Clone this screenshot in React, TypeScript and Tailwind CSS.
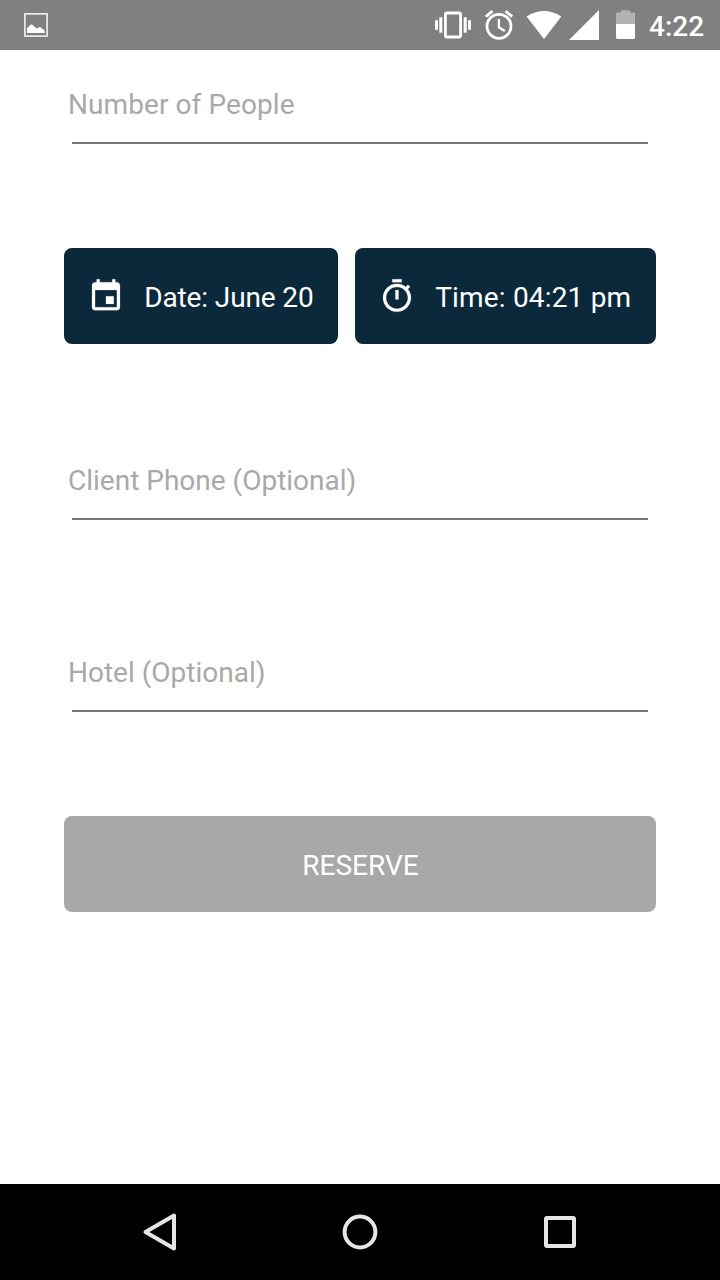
import React from "react";

function StatusBar() {
  return (
    <header className="flex h-[50px] items-start bg-[#808080] text-white">
      <svg className="ml-6 mt-[13px]" width="24" height="24" viewBox="0 0 24 24">
        <rect x="0.9" y="0.9" width="22.2" height="22.2" fill="none" stroke="#ececec" strokeWidth="1.7" />
        <path d="M3 20V15.2L7 11.5H8L12.5 15.5L15 14.2H16.5L20.7 17.4V20Z" fill="#fff" />
      </svg>
      <svg className="ml-auto" width="215" height="50" viewBox="433 0 215 50">
        <rect x="445.4" y="13" width="15.2" height="24" rx="1.6" fill="none" stroke="#fff" strokeWidth="2.8" />
        <g fill="#fff">
          <path d="M435 20.3h3v9.4h-3zM439.3 17.3h3v15.4h-3zM463.7 17.3h3v15.4h-3zM468 20.3h3v9.4h-3z" />
          <path d="M526.6 16.5Q543.8 5.5 561.3 16.5L544 39Z" />
          <path d="M569 40L599 10V40Z" />
          <path d="M616 24h19v13.6a1.4 1.4 0 0 1-1.4 1.4h-16.2a1.4 1.4 0 0 1-1.4-1.4z" />
        </g>
        <path d="M616 24V13.4a1 1 0 0 1 1-1h4V10.3h9v2.1h4a1 1 0 0 1 1 1V24z" fill="#b3b3b3" />
        <g fill="none" stroke="#fff" strokeWidth="2.7">
          <circle cx="499" cy="26.3" r="12" />
          <path d="M485.8 16.7L492.5 11.1M512.2 16.7L505.5 11.1" strokeWidth="2.9" />
          <path d="M498.9 19V27.3L504.8 31" strokeWidth="2.2" />
        </g>
      </svg>
      <span className="ml-px w-[71px] pt-[10px] text-[28px] leading-[33px] font-medium">4:22</span>
    </header>
  );
}

function Field({ label, className = "" }: { label: string; className?: string }) {
  return (
    <label className={`flex h-[60px] flex-col ${className}`}>
      <input
        aria-label={label}
        placeholder={label}
        className="h-[58px] w-full bg-transparent pb-[18px] pl-1 text-[28px] leading-[40px] outline-none placeholder:text-[#a9a9a9]"
      />
      <span className="mx-2 h-[2px] bg-[#757575]" />
    </label>
  );
}

function PickerButton({ icon, label, className }: { icon: string; label: string; className: string }) {
  return (
    <button className={`flex h-24 items-center rounded-lg bg-[#0b293b] pl-[23px] text-[28px] leading-[33px] text-white ${className}`}>
      <svg className="shrink-0" width="38" height="38" viewBox="-0.2 -0.4 24.43 24.43" fill="currentColor" stroke="currentColor" strokeWidth="0.12">
        <path d={icon} />
      </svg>
      <span className="ml-[19.2px] pt-[2px] whitespace-nowrap">{label}</span>
    </button>
  );
}

const calendarPath =
  "M17 12h-5v5h5v-5zM16 1v2H8V1H6v2H5c-1.11 0-1.99.9-1.99 2L3 19c0 1.1.89 2 2 2h14c1.1 0 2-.9 2-2V5c0-1.1-.9-2-2-2h-1V1h-2zm3 18H5V8h14v11z";
const timerPath =
  "M15 1H9v2h6V1zm-4 13h2V8h-2v6zm8.03-6.61l1.42-1.42c-.43-.51-.9-.99-1.41-1.41l-1.42 1.42C16.07 4.74 14.12 4 12 4c-4.97 0-9 4.03-9 9s4.02 9 9 9 9-4.03 9-9c0-2.12-.74-4.07-1.97-5.61zM12 20c-3.87 0-7-3.13-7-7s3.13-7 7-7 7 3.13 7 7-3.13 7-7 7z";

function NavigationBar() {
  return (
    <nav className="flex h-24 items-center justify-center bg-black">
      <svg width="600" height="96" viewBox="60 0 600 96" fill="none" stroke="#e6e6e6" strokeWidth="4" strokeLinejoin="round">
        <path d="M145.5 48L174 31.5V64.5Z" />
        <circle cx="360" cy="48" r="15.4" />
        <rect x="546" y="34" width="28" height="28" rx="1" />
      </svg>
    </nav>
  );
}

export default function App() {
  return (
    <div className="flex h-[1280px] w-[720px] flex-col overflow-hidden bg-white font-['Roboto',sans-serif]">
      <StatusBar />
      <main className="flex flex-1 flex-col px-16 pt-[34px]">
        <Field label="Number of People" className="tracking-[0.08px]" />
        <div className="mt-[104px] mb-[116px] flex gap-[17px]">
          <PickerButton icon={calendarPath} label="Date: June 20" className="w-[274px] tracking-[-0.12px]" />
          <PickerButton icon={timerPath} label="Time: 04:21 pm" className="w-[301px] tracking-[0.18px]" />
        </div>
        <Field label="Client Phone (Optional)" />
        <div className="mt-[132px]">
          <Field label="Hotel (Optional)" />
        </div>
        <button className="mt-[104px] h-24 rounded-lg bg-[#a8a8a8] pt-[2px] pl-px text-[28px] leading-[33px] text-white">
          RESERVE
        </button>
      </main>
      <NavigationBar />
    </div>
  );
}
